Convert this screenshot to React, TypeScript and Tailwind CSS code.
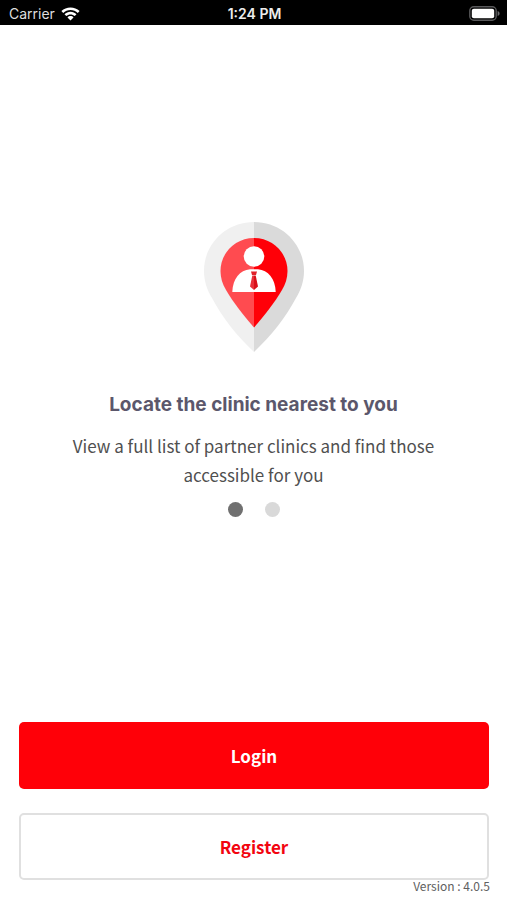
import { useState } from "react";

function WifiIcon() {
  return (
    <svg className="h-[14px] w-[19px]" viewBox="0 0 19 14" fill="#fff" aria-hidden="true">
      <path d="M9.5 0.4C13 0.4 16.2 1.7 18.6 4L16.8 5.9C14.9 4.1 12.3 3 9.5 3S4.1 4.1 2.2 5.9L0.4 4C2.8 1.7 6 0.4 9.5 0.4Z" />
      <path d="M9.5 4.8C11.8 4.8 13.9 5.7 15.5 7.2L13.7 9.1C12.6 8 11.1 7.4 9.5 7.4S6.4 8 5.3 9.1L3.5 7.2C5.1 5.7 7.2 4.8 9.5 4.8Z" />
      <path d="M9.5 9.1C10.6 9.1 11.7 9.6 12.5 10.4L9.5 13.5L6.5 10.4C7.3 9.6 8.4 9.1 9.5 9.1Z" />
    </svg>
  );
}

function BatteryIcon() {
  return (
    <svg className="h-[15px] w-[31px]" viewBox="0 0 31 15" aria-hidden="true">
      <rect x="0.8" y="0.8" width="26.4" height="13.4" rx="4" fill="#000" stroke="#59595b" strokeWidth="1.4" />
      <rect x="2.8" y="2.8" width="22.4" height="9.4" rx="2" fill="#fff" />
      <path d="M28.6 5C30 5.4 30.6 6.4 30.6 7.5S30 9.6 28.6 10Z" fill="#6b6b6d" />
    </svg>
  );
}

function ClinicPin() {
  return (
    <svg className="h-[130px] w-[100px]" viewBox="0 0 100 130" aria-hidden="true">
      <path d="M50 0C22 0 0 22 0 49C0 59 3 68 8 76C18 95 33 114 50 130Z" fill="#f0f0f0" />
      <path d="M50 0C78 0 100 22 100 49C100 59 97 68 92 76C82 95 67 114 50 130Z" fill="#dadada" />
      <path d="M50 16C31 16 16.500 31 16.500 49C16.500 56 18.500 62 22 68C29 80 39 93 50 105.500Z" fill="#ff4b50" />
      <path d="M50 16C69 16 83.500 31 83.500 49C83.500 56 81.500 62 78 68C71 80 61 93 50 105.500Z" fill="#ff0008" />
      <circle cx="50" cy="34.500" r="10.300" fill="#fff" />
      <path d="M28.300 70C28.600 57 36 48 46 47.300H54C64 48 71.400 57 71.700 70Z" fill="#fff" />
      <path d="M47 49.500H53L52 53H48Z" fill="#e0202a" />
      <path d="M48.300 53.400H50V68L46 64.500Z" fill="#e8303a" />
      <path d="M50 53.400H51.700L54 64.500L50 68Z" fill="#d8101a" />
    </svg>
  );
}

const slides = [
  {
    title: "Locate the clinic nearest to you",
    text: "View a full list of partner clinics and find those accessible for you",
  },
  {
    title: "Locate the clinic nearest to you",
    text: "View a full list of partner clinics and find those accessible for you",
  },
];

export default function App() {
  const [active, setActive] = useState(0);

  return (
    <div className="flex min-h-screen flex-col bg-white font-['Noto_Sans_CJK_SC','Noto_Sans',sans-serif]">
      <header className="grid h-[25px] grid-cols-3 items-center bg-black pt-[2px] pr-[7px] pl-[9px] font-['Inter',sans-serif] text-sm leading-5 text-white">
        <div className="flex items-center gap-[6px]">
          <span className="text-[#dedede]">Carrier</span>
          <WifiIcon />
        </div>
        <span className="text-center font-semibold text-[#ededed]">1:24 PM</span>
        <div className="flex justify-end">
          <BatteryIcon />
        </div>
      </header>

      <main className="flex flex-1 flex-col items-center justify-center px-12 text-center">
        <ClinicPin />
        <h1 className="mt-[41px] font-['Inter',sans-serif] text-[19px] leading-6 font-bold text-[#5b576b]">
          {slides[active].title}
        </h1>
        <p className="mt-[14px] max-w-[400px] text-[17px] leading-[29px] text-[#505050]">{slides[active].text}</p>
        <div className="mt-[13px] flex gap-[22px]">
          {slides.map((_, index) => (
            <button
              key={index}
              type="button"
              aria-label={`Slide ${index + 1}`}
              onClick={() => setActive(index)}
              className={index === active ? "size-[15px] rounded-full bg-[#707070]" : "size-[15px] rounded-full bg-[#d9d9d9]"}
            />
          ))}
        </div>
      </main>

      <footer className="py-2 pr-[17px] pl-[19px]">
        <div className="flex flex-col gap-6 pr-px">
          <button type="button" className="h-[67px] rounded-[5px] bg-[#ff0008] text-[17px] leading-6 font-bold text-white">
            Login
          </button>
          <button
            type="button"
            className="h-[67px] rounded-[5px] border-2 border-[#e0e0e0] bg-white text-[17px] leading-6 font-bold text-[#f20510]"
          >
            Register
          </button>
        </div>
        <p className="text-right text-xs leading-3 text-[#606060]">Version : 4.0.5</p>
      </footer>
    </div>
  );
}
